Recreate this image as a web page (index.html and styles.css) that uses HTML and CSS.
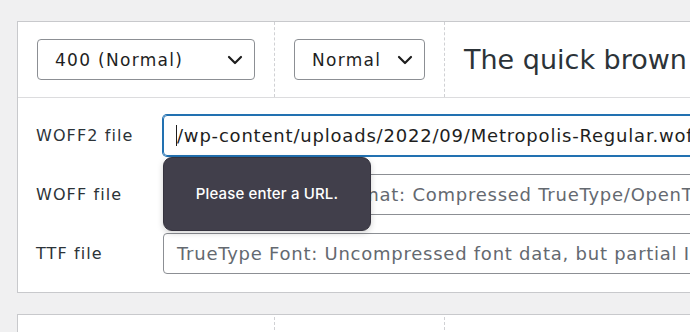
FILE: index.html
```html
<!DOCTYPE html>
<html lang="en">
<head>
<meta charset="utf-8">
<title>Font files</title>
<link rel="stylesheet" href="styles.css">
</head>
<body>
<div class="page">
  <section class="card">
    <div class="card-head">
      <div class="cell cell-weight">
        <div class="select select-weight">
          <span class="select-text">400 (Normal)</span>
          <svg class="chev" width="16" height="10" viewBox="0 0 16 10"><path d="M2 2 L8 8 L14 2" fill="none" stroke="#1e1e1e" stroke-width="2.2" stroke-linecap="round" stroke-linejoin="round"/></svg>
        </div>
      </div>
      <div class="cell cell-style">
        <div class="select select-style">
          <span class="select-text">Normal</span>
          <svg class="chev" width="16" height="10" viewBox="0 0 16 10"><path d="M2 2 L8 8 L14 2" fill="none" stroke="#1e1e1e" stroke-width="2.2" stroke-linecap="round" stroke-linejoin="round"/></svg>
        </div>
      </div>
      <div class="cell cell-preview">
        <span class="preview">The quick brown fox jumps over the lazy dog</span>
      </div>
    </div>
    <div class="card-body">
      <label class="label">WOFF2 file</label>
      <div class="field field-focus"><span class="caret"></span><span class="value">/wp-content/uploads/2022/09/Metropolis-Regular.woff2</span></div>
      <label class="label">WOFF file</label>
      <div class="field"><span class="placeholder">Web Open Font Format: Compressed TrueType/OpenType font with information about font origin</span></div>
      <label class="label">TTF file</label>
      <div class="field"><span class="placeholder">TrueType Font: Uncompressed font data, but partial IE9+ support</span></div>
    </div>
  </section>
  <section class="card card-next">
    <div class="card-head card-head-next">
      <div class="cell cell-weight"></div>
      <div class="cell cell-style"></div>
      <div class="cell cell-preview"></div>
    </div>
  </section>
  <div class="tooltip">Please enter a URL.</div>
</div>
</body>
</html>
```

FILE: styles.css
```css
html, body {
  margin: 0;
  padding: 0;
}
body {
  background: #f0f0f1;
  width: 690px;
  height: 332px;
  overflow: hidden;
  font-family: "DejaVu Sans", sans-serif;
  color: #2c3338;
}
.page {
  position: relative;
  padding: 21px 0 0 17px;
}
.card {
  width: 900px;
  background: #fff;
  border: 1px solid #c8c9cc;
  border-right: none;
}
.card-next {
  margin-top: 21px;
  height: 40px;
}
.card-head {
  display: flex;
  border-bottom: 1px solid #dcdcde;
}
.card-head-next {
  border-bottom: none;
  height: 40px;
}
.cell {
  box-sizing: border-box;
  padding: 17px 19px 17px 19px;
  display: flex;
  align-items: center;
}
.cell-weight {
  width: 257px;
  border-right: 1px dashed #d0d1d4;
}
.cell-style {
  width: 170px;
  padding-left: 19px;
  border-right: 1px dashed #d0d1d4;
}
.card-head-next .cell {
  padding: 0;
  margin-top: 2px;
}
.cell-preview {
  flex: 1;
  padding-left: 19px;
  white-space: nowrap;
  overflow: hidden;
}
.select {
  box-sizing: border-box;
  height: 41px;
  border: 1px solid #8c8f94;
  border-radius: 4px;
  display: flex;
  align-items: center;
  justify-content: space-between;
  padding: 0 11px 0 17px;
  color: #1e1e1e;
}
.select-weight {
  width: 219px;
}
.select-style {
  width: 131px;
}
.select-text {
  font-size: 17px;
  letter-spacing: 1.3px;
}
.chev {
  display: block;
}
.preview {
  font-size: 27px;
  letter-spacing: 0;
  color: #2c3338;
}
.card-body {
  display: grid;
  grid-template-columns: 127px 1fr;
  row-gap: 18px;
  align-items: center;
  padding: 17px 0 18px 18px;
}
.label {
  font-size: 16px;
  letter-spacing: 1.1px;
  color: #2c3338;
}
.field {
  box-sizing: border-box;
  height: 41px;
  border: 1px solid #8c8f94;
  border-radius: 4px;
  display: flex;
  align-items: center;
  padding: 0 13px;
  white-space: nowrap;
  overflow: hidden;
  font-size: 18px;
  letter-spacing: 0.75px;
}
.field-focus {
  border-color: #2271b1;
  box-shadow: 0 0 0 1px #2271b1;
  padding-left: 12px;
  letter-spacing: 0.8px;
}
.caret {
  display: inline-block;
  width: 1px;
  height: 21px;
  background: #1e1e1e;
}
.value {
  color: #1e1e1e;
}
.placeholder {
  color: #646970;
}
.tooltip {
  position: absolute;
  left: 163px;
  top: 157px;
  width: 208px;
  height: 74px;
  box-sizing: border-box;
  background: #413f4b;
  border: 1px solid #35333e;
  border-radius: 9px;
  box-shadow: 0 2px 6px rgba(0,0,0,0.18);
  color: #fff;
  font-family: Inter, "Liberation Sans", sans-serif;
  font-weight: 500;
  font-size: 15px;
  letter-spacing: 0.15px;
  display: flex;
  align-items: center;
  justify-content: center;
  padding-bottom: 2px;
}
```
